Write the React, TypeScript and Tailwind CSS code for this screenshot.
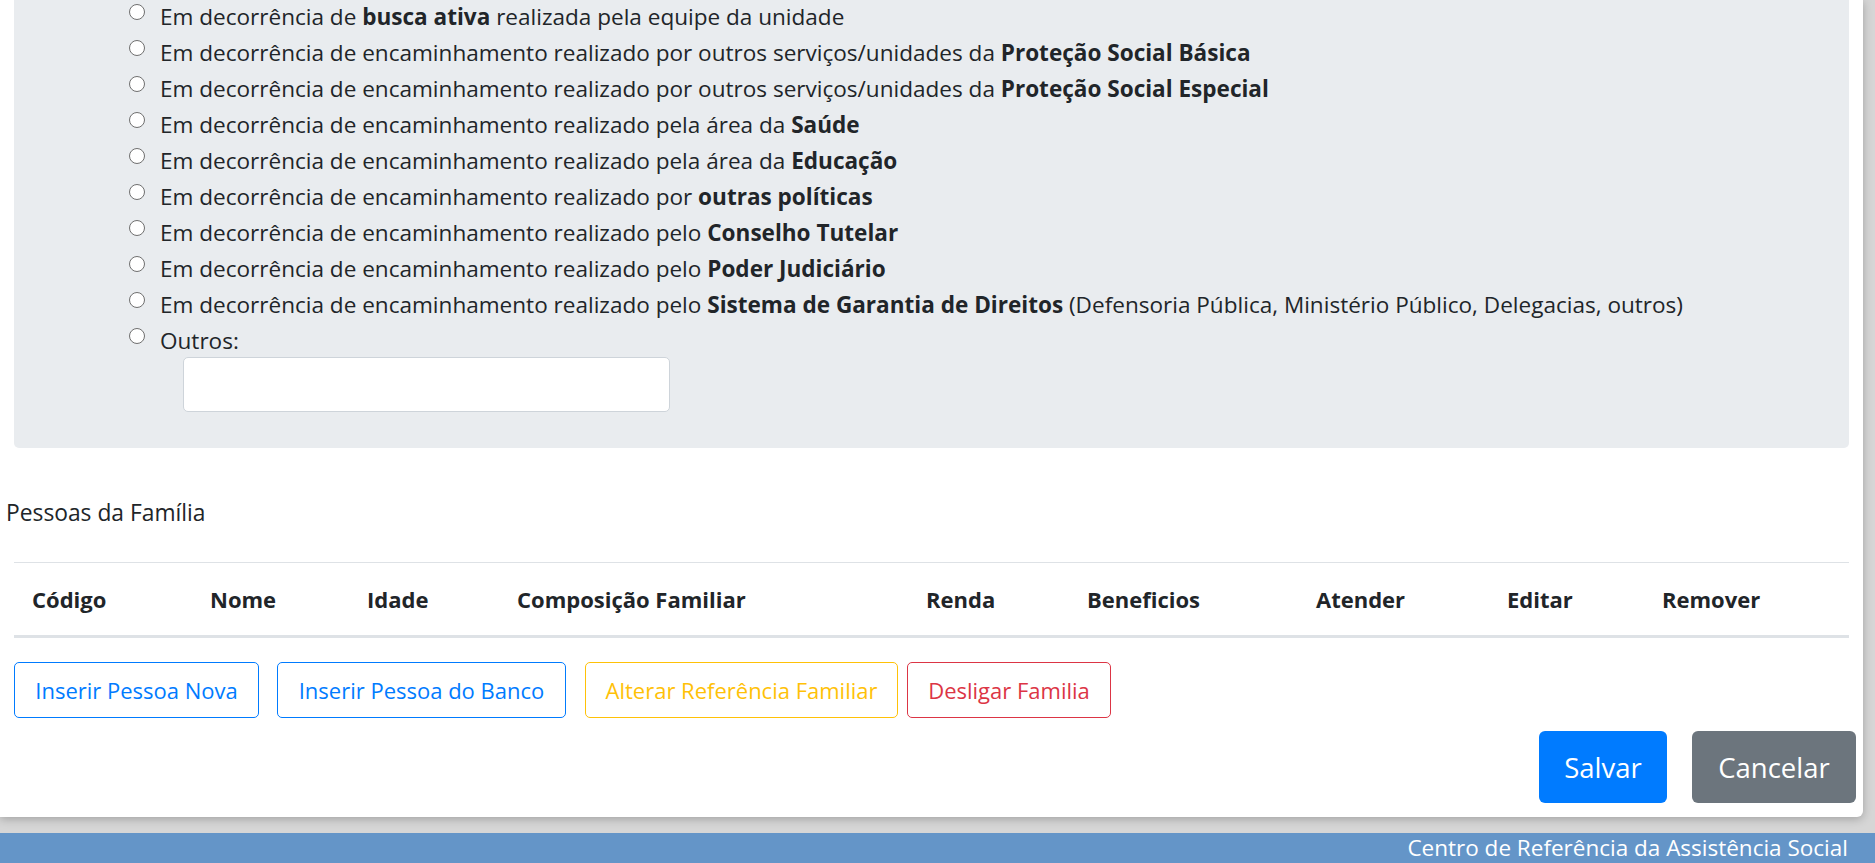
import React from "react";

type Row = { pre: string; bold?: string; post?: string };

const rows: Row[] = [
  { pre: "Em decorrência de ", bold: "busca ativa", post: " realizada pela equipe da unidade" },
  { pre: "Em decorrência de encaminhamento realizado por outros serviços/unidades da ", bold: "Proteção Social Básica" },
  { pre: "Em decorrência de encaminhamento realizado por outros serviços/unidades da ", bold: "Proteção Social Especial" },
  { pre: "Em decorrência de encaminhamento realizado pela área da ", bold: "Saúde" },
  { pre: "Em decorrência de encaminhamento realizado pela área da ", bold: "Educação" },
  { pre: "Em decorrência de encaminhamento realizado por ", bold: "outras políticas" },
  { pre: "Em decorrência de encaminhamento realizado pelo ", bold: "Conselho Tutelar" },
  { pre: "Em decorrência de encaminhamento realizado pelo ", bold: "Poder Judiciário" },
  {
    pre: "Em decorrência de encaminhamento realizado pelo ",
    bold: "Sistema de Garantia de Direitos",
    post: " (Defensoria Pública, Ministério Público, Delegacias, outros)",
  },
];

const headers = ["Código", "Nome", "Idade", "Composição Familiar", "Renda", "Beneficios", "Atender", "Editar", "Remover"];

function Radio() {
  return (
    <span className="mt-[4px] ml-[115px] mr-[15px] block h-[16px] w-[16px] shrink-0 rounded-full border border-[#6f6f6f] bg-white" />
  );
}

export default function App() {
  return (
    <div
      className="min-h-screen bg-[#d6d6d6] text-[#212529] text-[22px] leading-[33px]"
      style={{ fontFamily: '"Open Sans", "Noto Sans", sans-serif' }}
    >
      <div className="mr-[12px] rounded-br-[6px] bg-white px-[14px] pb-[14px] shadow-[0_2px_10px_rgba(0,0,0,0.25)]">
        <div className="rounded-b-[5px] bg-[#e9ecef] pb-[36px] text-[22.55px]">
          {rows.map((r, i) => (
            <div key={i} className="flex h-[36px] whitespace-nowrap">
              <Radio />
              <span>
                {r.pre}
                {r.bold && <span className="font-bold">{r.bold}</span>}
                {r.post}
              </span>
            </div>
          ))}
          <div className="flex h-[33px]">
            <Radio />
            <span>Outros:</span>
          </div>
          <div className="ml-[169px] h-[55px] w-[487px] rounded-[5px] border border-[#ced4da] bg-white" />
        </div>

        <div className="-ml-[8px] mt-[48px] h-[33px] text-[22.8px]">Pessoas da Família</div>

        <div className="mt-[33px] grid grid-cols-[178px_157px_150px_409px_161px_229px_191px_155px_205px] border-t border-b-[3px] border-[#dee2e6] py-[20px] pb-[19px] font-bold">
          {headers.map((h) => (
            <div key={h} className="pl-[18px] whitespace-nowrap">
              {h}
            </div>
          ))}
        </div>

        <div className="mt-[24px] flex">
          <button className="mr-[18px] flex h-[56px] w-[245px] items-center justify-center rounded-[5px] border border-[#007bff] text-[#007bff]">
            Inserir Pessoa Nova
          </button>
          <button className="mr-[19px] flex h-[56px] w-[289px] items-center justify-center rounded-[5px] border border-[#007bff] text-[#007bff]">
            Inserir Pessoa do Banco
          </button>
          <button className="mr-[9px] flex h-[56px] w-[313px] items-center justify-center rounded-[5px] border border-[#ffc107] text-[#ffc107]">
            Alterar Referência Familiar
          </button>
          <button className="flex h-[56px] w-[204px] items-center justify-center rounded-[5px] border border-[#dc3545] text-[#dc3545]">
            Desligar Familia
          </button>
        </div>

        <div className="mt-[13px] -mr-[7px] flex justify-end gap-[25px]">
          <button className="flex h-[72px] w-[128px] items-center justify-center rounded-[6px] bg-[#007bff] text-[27.5px] text-white">
            Salvar
          </button>
          <button className="flex h-[72px] w-[164px] items-center justify-center rounded-[6px] bg-[#6c757d] text-[27.5px] text-white">
            Cancelar
          </button>
        </div>
      </div>

      <div className="mt-[16px] h-[30px] bg-[#6495c8] pr-[27px] text-right text-[22.5px] leading-[30px] text-white">
        Centro de Referência da Assistência Social
      </div>
    </div>
  );
}
